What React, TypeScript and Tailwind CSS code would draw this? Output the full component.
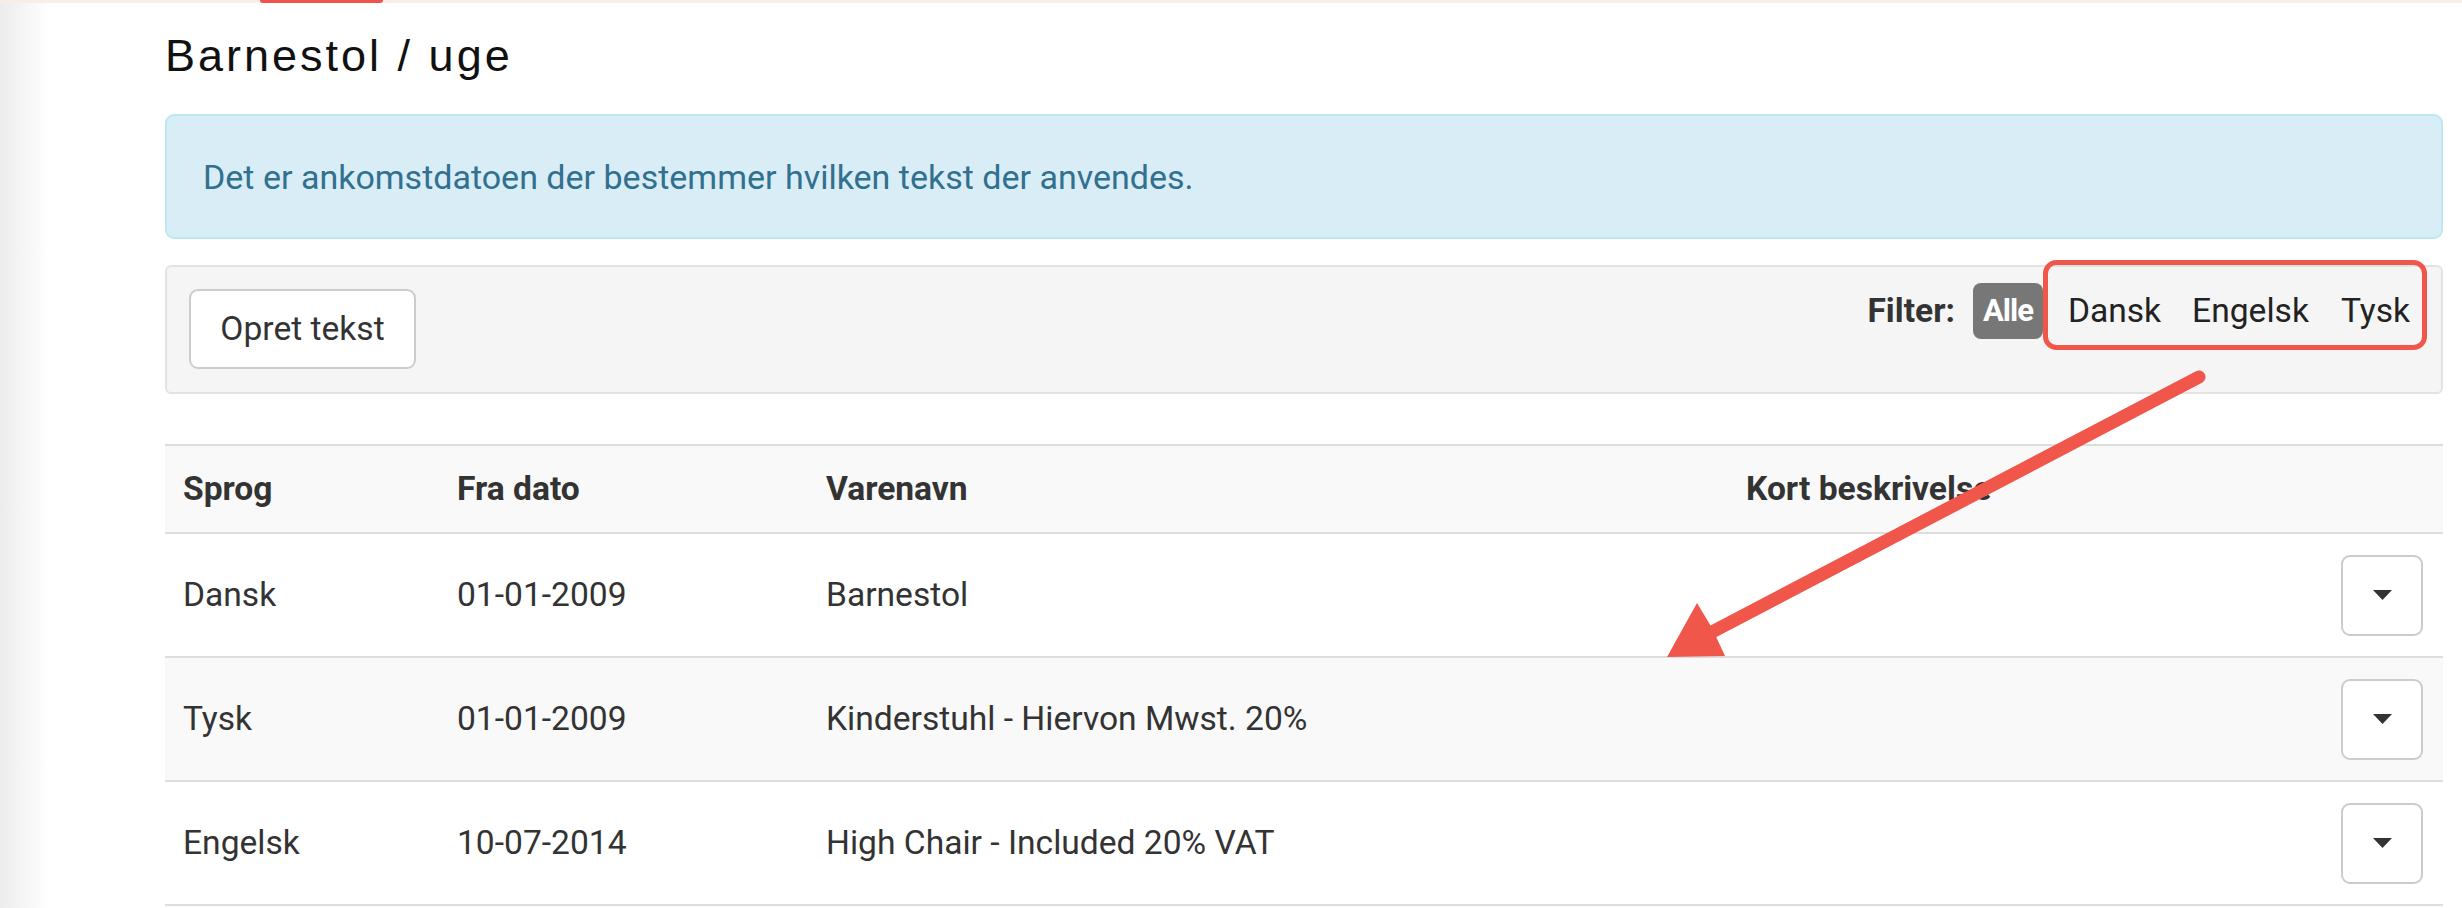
import React from "react";

const rows = [
  { sprog: "Dansk", dato: "01-01-2009", navn: "Barnestol", striped: false },
  { sprog: "Tysk", dato: "01-01-2009", navn: "Kinderstuhl - Hiervon Mwst. 20%", striped: true },
  { sprog: "Engelsk", dato: "10-07-2014", navn: "High Chair - Included 20% VAT", striped: false },
];

function Caret() {
  return (
    <svg width="19" height="10" viewBox="0 0 19 10">
      <polygon points="0,0 19,0 9.5,10" fill="#333333" />
    </svg>
  );
}

export default function App() {
  const body = { fontFamily: "Roboto, 'Liberation Sans', Arial, sans-serif" };
  return (
    <div className="relative w-[2462px] h-[908px] overflow-hidden bg-white" style={body}>
      {/* top strip */}
      <div className="h-[3px] bg-[#f5efe6] flex">
        <div className="ml-[260px] w-[123px] h-[3px] bg-[#f0534a] rounded-b-[3px]" />
      </div>

      <div className="flex h-[905px]">
        <div className="w-[50px] bg-gradient-to-r from-[#ececec] to-white" />
        <div className="flex-1 pl-[115px] pr-[19px] flex flex-col">
          {/* title */}
          <div
            className="mt-[27px] leading-[52px] text-[45px] tracking-[3px] text-[#111111]"
            style={{ fontFamily: "'Liberation Sans', Arial, sans-serif" }}
          >
            Barnestol / uge
          </div>

          {/* alert */}
          <div className="mt-[32px] h-[125px] border-2 border-[#bce8f1] bg-[#d9edf7] rounded-[9px] pl-[36px] pt-[37px] text-[34px] leading-[48px] text-[#31708f]">
            Det er ankomstdatoen der bestemmer hvilken tekst der anvendes.
          </div>

          {/* well */}
          <div className="mt-[26px] h-[129px] border-2 border-[#e3e3e3] bg-[#f5f5f5] rounded-[6px] pl-[22px] pr-[31px] pt-[16px] flex justify-between items-start">
            <button className="mt-[6px] w-[227px] h-[80px] bg-white border-2 border-[#cccccc] rounded-[9px] text-[33.6px] text-[#333333] flex items-center justify-center">
              Opret tekst
            </button>
            <div className="h-[56px] flex items-center text-[33.6px] text-[#222222]">
              <span className="font-bold text-[#333333]">Filter:</span>
              <span className="ml-[18px] h-[56px] px-[10px] rounded-[8px] bg-[#777777] text-white font-bold text-[31px] tracking-[-1px] flex items-center">
                Alle
              </span>
              <span className="ml-[25px]">Dansk</span>
              <span className="ml-[31px]">Engelsk</span>
              <span className="ml-[32px]">Tysk</span>
            </div>
          </div>

          {/* table */}
          <div className="mt-[50px] border-t-2 border-[#dddddd] text-[33.6px] text-[#333333]">
            <div className="grid grid-cols-[274px_369px_920px_1fr] h-[88px] items-center bg-[#f9f9f9] border-b-2 border-[#dddddd] font-bold">
              <div className="pl-[18px]">Sprog</div>
              <div className="pl-[18px]">Fra dato</div>
              <div className="pl-[18px]">Varenavn</div>
              <div className="pl-[18px]">Kort beskrivelse</div>
            </div>
            {rows.map((r) => (
              <div
                key={r.sprog}
                className={
                  "grid grid-cols-[274px_369px_920px_1fr] h-[124px] items-center border-b-2 border-[#dddddd] " +
                  (r.striped ? "bg-[#f9f9f9]" : "bg-white")
                }
              >
                <div className="pl-[18px]">{r.sprog}</div>
                <div className="pl-[18px]">{r.dato}</div>
                <div className="pl-[18px]">{r.navn}</div>
                <div className="flex justify-end pr-[20px]">
                  <button className="w-[82px] h-[81px] bg-white border-2 border-[#cccccc] rounded-[9px] flex items-center justify-center">
                    <Caret />
                  </button>
                </div>
              </div>
            ))}
          </div>
        </div>
      </div>

      {/* annotation overlay */}
      <svg
        className="absolute left-0 top-0 pointer-events-none"
        width="2462"
        height="908"
        viewBox="0 0 2462 908"
      >
        <rect x="2045.5" y="262.5" width="379" height="85" rx="11" fill="none" stroke="#f1564b" strokeWidth="5" />
        <line x1="2199" y1="377" x2="1712" y2="632" stroke="#f1564b" strokeWidth="13" strokeLinecap="round" />
        <polygon points="1667,657 1697,603 1712,628 1725,656" fill="#f1564b" />
      </svg>
    </div>
  );
}
